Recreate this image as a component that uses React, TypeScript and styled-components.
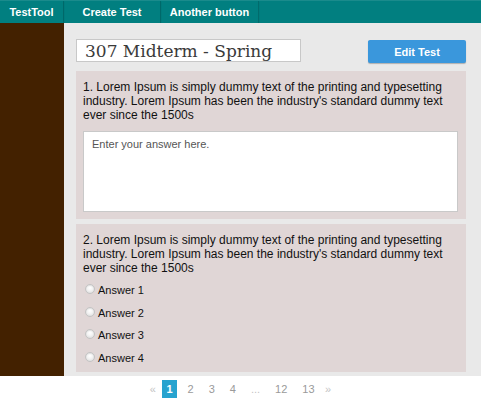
import React from "react";
import styled, { createGlobalStyle } from "styled-components";

const Global = createGlobalStyle`
  html, body { margin: 0; padding: 0; background: #fff; }
  body { font-family: "Liberation Sans", Arial, sans-serif; }
  * { box-sizing: border-box; }
`;

const Shell = styled.div`
  width: 481px;
`;

const NavBar = styled.nav`
  display: flex;
  height: 23px;
  background: #017f80;
  border-top: 1px solid #1a8b8c;
`;

const NavItem = styled.a<{ $w: number }>`
  display: flex;
  align-items: center;
  justify-content: center;
  width: ${(p) => p.$w}px;
  height: 100%;
  color: #fff;
  font-size: 11px;
  font-weight: bold;
  text-decoration: none;
  border-right: 1px solid #016b6c;
  box-shadow: 0 1px 1px rgba(0, 0, 0, 0.18);
`;

const Body = styled.div`
  display: flex;
`;

const Sidebar = styled.aside`
  width: 64px;
  flex: none;
  background: #432100;
`;

const Main = styled.main`
  flex: 1;
  background: #e9e9e9;
  padding: 16px 15px 4px 12px;
  display: flex;
  flex-direction: column;
  gap: 5px;
`;

const Header = styled.div`
  display: flex;
  justify-content: space-between;
  align-items: flex-start;
  margin-bottom: 3px;
`;

const TitleInput = styled.input`
  width: 225px;
  height: 23px;
  border: 1px solid #c8c8c8;
  background: #fff;
  padding: 0 8px;
  font-family: "DejaVu Serif", "Liberation Serif", serif;
  font-size: 17px;
  color: #3a3a3a;
  outline: none;
`;

const EditButton = styled.button`
  width: 98px;
  height: 23px;
  margin-top: 1px;
  border: none;
  border-radius: 2px;
  background: #3a97dc;
  color: #fff;
  font-family: "Liberation Sans", Arial, sans-serif;
  font-size: 11px;
  font-weight: bold;
  box-shadow: 0 1px 1px rgba(0, 0, 0, 0.25);
  cursor: pointer;
`;

const Card = styled.section<{ $pb: number }>`
  background: #e0d6d6;
  padding: 9px 8px ${(p) => p.$pb}px 7px;
`;

const Question = styled.p`
  margin: 0;
  font-size: 12px;
  line-height: 14px;
  color: #111;
`;

const AnswerBox = styled.textarea`
  display: block;
  width: 100%;
  height: 81px;
  margin-top: 9px;
  border: 1px solid #c9c9c9;
  background: #fff;
  padding: 6px 8px;
  font-family: "Liberation Sans", Arial, sans-serif;
  font-size: 11px;
  resize: none;
  outline: none;
  &::placeholder { color: #555; }
`;

const Options = styled.div`
  display: flex;
  flex-direction: column;
  margin-top: 4px;
`;

const Option = styled.label`
  display: flex;
  align-items: center;
  height: 22.5px;
  font-size: 11px;
  color: #111;
`;

const Radio = styled.input.attrs({ type: "radio" })`
  appearance: none;
  width: 10px;
  height: 10px;
  margin: -2px 3px 0 2px;
  border-radius: 50%;
  border: 1px solid #c4c4c4;
  background: radial-gradient(circle at 50% 35%, #ffffff 0%, #f2f2f2 45%, #d6d6d6 100%);
  box-shadow: inset 0 1px 1px rgba(0, 0, 0, 0.08);
`;

const Pager = styled.div`
  display: flex;
  justify-content: center;
  align-items: center;
  gap: 6px;
  padding: 4px 0 6px;
`;

const PageItem = styled.span<{ $active?: boolean; $muted?: boolean; $arrow?: boolean }>`
  display: inline-flex;
  align-items: center;
  justify-content: center;
  height: 18px;
  padding: 0 ${(p) => (p.$arrow ? 0 : 4.5)}px;
  font-size: 11px;
  color: ${(p) => (p.$active ? "#fff" : p.$muted ? "#c4c4c4" : "#9a9a9a")};
  background: ${(p) => (p.$active ? "#27a3cf" : "transparent")};
  font-weight: ${(p) => (p.$active ? "bold" : "normal")};
`;

const loremText =
  "Lorem Ipsum is simply dummy text of the printing and typesetting industry. Lorem Ipsum has been the industry's standard dummy text ever since the 1500s";

export default function App() {
  return (
    <Shell>
      <Global />
      <NavBar>
        <NavItem $w={64}>TestTool</NavItem>
        <NavItem $w={97}>Create Test</NavItem>
        <NavItem $w={98}>Another button</NavItem>
      </NavBar>
      <Body>
        <Sidebar />
        <Main>
          <Header>
            <TitleInput defaultValue="307 Midterm - Spring" />
            <EditButton>Edit Test</EditButton>
          </Header>
          <Card $pb={7}>
            <Question>1. {loremText}</Question>
            <AnswerBox placeholder="Enter your answer here." />
          </Card>
          <Card $pb={3}>
            <Question>2. {loremText}</Question>
            <Options>
              {["Answer 1", "Answer 2", "Answer 3", "Answer 4"].map((a) => (
                <Option key={a}>
                  <Radio name="q2" />
                  {a}
                </Option>
              ))}
            </Options>
          </Card>
        </Main>
      </Body>
      <Pager>
        <PageItem $muted $arrow>«</PageItem>
        <PageItem $active>1</PageItem>
        <PageItem>2</PageItem>
        <PageItem>3</PageItem>
        <PageItem>4</PageItem>
        <PageItem $muted>...</PageItem>
        <PageItem>12</PageItem>
        <PageItem>13</PageItem>
        <PageItem $muted $arrow>»</PageItem>
      </Pager>
    </Shell>
  );
}
